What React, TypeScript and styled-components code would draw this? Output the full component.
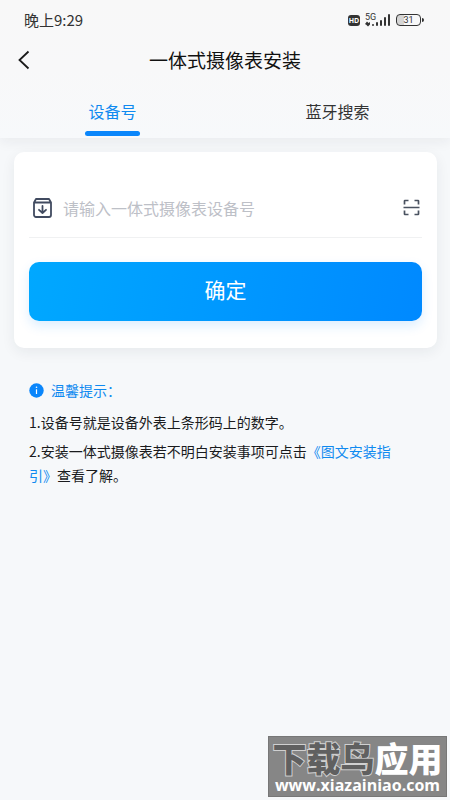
import React, { useState } from "react";
import styled, { createGlobalStyle } from "styled-components";

const GlobalStyle = createGlobalStyle`
  * { box-sizing: border-box; }
  html, body { margin: 0; background: #f6f8fa; }
  body, button, input { font-family: "Noto Sans CJK SC", sans-serif; }
`;

const Page = styled.div`
  min-height: 100vh;
  position: relative;
  color: #1a1b1d;
`;

const Top = styled.header`
  position: relative;
  background: linear-gradient(#f8f8f8, #f8f8f9 50%, #f7f9fb);
  box-shadow: 0 4px 12px rgba(30, 40, 50, 0.06);
`;

const StatusBar = styled.div`
  height: 40px;
  padding: 0 26px 0 24px;
  display: flex;
  align-items: center;
  justify-content: space-between;
  font-size: 15px;
  line-height: 20px;
  color: #333;
`;

const StatusIcons = styled.div`
  display: flex;
  align-items: center;
  gap: 5px;
`;

const HdBadge = styled.span`
  width: 12px;
  height: 11px;
  border-radius: 3px;
  background: #333;
  color: #fff;
  font: 700 7px/11px "Open Sans", sans-serif;
  text-align: center;
`;

const Network = styled.div`
  width: 26px;
  height: 14px;
  position: relative;
  svg { display: block; }
`;

const NetworkLabel = styled.span`
  position: absolute;
  left: 0;
  top: 0;
  font: 400 9px/8px Roboto, sans-serif;
`;

const Battery = styled.div`
  display: flex;
  align-items: center;
  gap: 1px;
  &::after {
    content: "";
    width: 2px;
    height: 4px;
    border-radius: 0 2px 2px 0;
    background: #333;
  }
`;

const BatteryLevel = styled.span`
  width: 25px;
  height: 12px;
  border: 1px solid #333;
  border-radius: 4px;
  background: linear-gradient(90deg, #d5d5d5 32%, transparent 32%);
  font: 400 9px/10px Roboto, sans-serif;
  text-align: center;
`;

const TitleBar = styled.div`
  height: 40px;
  display: grid;
  grid-template-columns: 48px 1fr 48px;
  align-items: center;
`;

const BackButton = styled.button`
  width: 48px;
  height: 40px;
  padding: 0 0 0 17px;
  border: 0;
  background: none;
  svg { display: block; }
`;

const Title = styled.h1`
  margin: 0;
  font-size: 19px;
  line-height: 28px;
  font-weight: 400;
  text-align: center;
  color: #111;
`;

const Tabs = styled.div`
  display: flex;
  height: 58px;
  padding-top: 19px;
`;

const Tab = styled.button<{ $active: boolean }>`
  flex: 1;
  display: flex;
  flex-direction: column;
  align-items: center;
  gap: 8px;
  padding: 0;
  border: 0;
  background: none;
  font-size: 16px;
  line-height: 24px;
  color: ${(p) => (p.$active ? "#0f8af0" : "#333")};
  &::after {
    content: "";
    width: 55px;
    height: 5px;
    border-radius: 3px;
    background: ${(p) => (p.$active ? "#0a86fb" : "transparent")};
  }
`;

const Card = styled.form`
  position: relative;
  margin: 14px 13px 0 14px;
  padding: 26px 15px 27px;
  border-radius: 10px;
  background: #fff;
  box-shadow: 0 4px 14px rgba(30, 40, 50, 0.07);
`;

const Field = styled.div`
  height: 60px;
  padding: 0 2px 0 4px;
  display: flex;
  align-items: center;
  border-bottom: 1px solid #f0f1f2;
  svg { display: block; flex: none; }
`;

const NumberInput = styled.input`
  flex: 1;
  min-width: 0;
  margin-left: 11px;
  padding: 0;
  border: 0;
  outline: 0;
  background: none;
  font-size: 16px;
  line-height: 24px;
  color: #333;
  &::placeholder { color: #bdc0c7; opacity: 1; }
`;

const ScanButton = styled.button`
  padding: 0;
  border: 0;
  background: none;
`;

const SubmitButton = styled.button`
  width: 100%;
  height: 59px;
  margin-top: 24px;
  padding: 0 0 6px;
  display: block;
  border: 0;
  border-radius: 10px;
  background: linear-gradient(100deg, #00a8ff, #0089ff);
  box-shadow: 0 5px 12px rgba(0, 137, 255, 0.14);
  font-size: 21px;
  line-height: 30px;
  color: #fff;
`;

const Hints = styled.section`
  padding: 30px 40px 0 29px;
  font-size: 14px;
  line-height: 24px;
`;

const HintTitle = styled.h2`
  margin: 0;
  display: flex;
  align-items: center;
  gap: 7px;
  font-size: 14px;
  line-height: 24px;
  font-weight: 400;
  color: #0f8af0;
`;

const HintLine = styled.p`
  margin: 0 0 5px;
  &:first-of-type { margin-top: 8px; }
`;

const GuideLink = styled.a`
  color: #0f8af0;
  text-decoration: none;
`;

const Watermark = styled.aside`
  position: absolute;
  right: 3px;
  bottom: 3px;
  width: 179px;
  height: 61px;
  padding-top: 4px;
  border: 1px solid #777;
  background: #868686;
  text-align: center;
  white-space: nowrap;
`;

const WatermarkName = styled.div`
  font-size: 34px;
  line-height: 34px;
  font-weight: 900;
  color: #fff;
`;

const Outlined = styled.span`
  color: #606060;
  -webkit-text-stroke: 2px #d0d0d0;
  paint-order: stroke fill;
`;

const WatermarkUrl = styled.div`
  font: 700 16px/20px "Open Sans", sans-serif;
  color: #fff;
`;

const SignalIcon = () => (
  <svg width="26" height="14" viewBox="0 0 26 14" fill="#333" aria-hidden="true">
    <path d="M0 11l2-2.5 1.5 1.5 1.5-1v2.5L3 13.5 1.5 12z" />
    <rect x="7" y="11" width="2" height="2" rx="1" />
    <rect x="11" y="9" width="2" height="4" rx="1" />
    <rect x="15" y="7" width="2" height="6" rx="1" />
    <rect x="19" y="4" width="2" height="9" rx="1" />
    <rect x="23" y="1" width="2" height="12" rx="1" />
  </svg>
);

const BackIcon = () => (
  <svg width="13" height="20" viewBox="0 0 13 20" fill="none" stroke="#1a1a1a" strokeWidth="1.8" aria-hidden="true">
    <path d="M11.5 1.5L2.5 10l9 8.5" />
  </svg>
);

const BoxIcon = () => (
  <svg width="19" height="20" viewBox="0 0 19 20" fill="none" stroke="#414b60" strokeWidth="1.8" strokeLinecap="round" strokeLinejoin="round" aria-hidden="true">
    <path d="M1 4.5L3 1h13l2 3.5V17a2 2 0 0 1-2 2H3a2 2 0 0 1-2-2zM1.5 4.5h16" />
    <path d="M9.5 8v7M6 11.8L9.5 15l3.5-3.2" />
  </svg>
);

const ScanIcon = () => (
  <svg width="17" height="17" viewBox="0 0 17 17" fill="none" stroke="#4a5260" strokeWidth="1.7" aria-hidden="true">
    <path d="M1.5 5.5V2q0-.5.5-.5h3.5M11.5 1.5H15q.5 0 .5.5v3.5M15.5 11.5V15q0 .5-.5.5h-3.5M5.5 15.5H2q-.5 0-.5-.5v-3.5M.5 8.5h16" />
  </svg>
);

const InfoIcon = () => (
  <svg width="15" height="15" viewBox="0 0 15 15" aria-hidden="true">
    <circle cx="7.5" cy="7.5" r="7.2" fill="#0a86fb" />
    <circle cx="7.5" cy="4.2" r=".8" fill="#fff" />
    <path d="M7.5 6.3V11" fill="none" stroke="#fff" strokeWidth="1.2" />
  </svg>
);

const TAB_NAMES = ["设备号", "蓝牙搜索"];

export default function App() {
  const [active, setActive] = useState(0);
  return (
    <Page>
      <GlobalStyle />
      <Top>
        <StatusBar>
          <span>晚上9:29</span>
          <StatusIcons>
            <HdBadge>HD</HdBadge>
            <Network>
              <NetworkLabel>5G</NetworkLabel>
              <SignalIcon />
            </Network>
            <Battery>
              <BatteryLevel>31</BatteryLevel>
            </Battery>
          </StatusIcons>
        </StatusBar>
        <TitleBar>
          <BackButton aria-label="返回"><BackIcon /></BackButton>
          <Title>一体式摄像表安装</Title>
        </TitleBar>
        <Tabs role="tablist">
          {TAB_NAMES.map((name, i) => (
            <Tab key={name} role="tab" aria-selected={i === active} $active={i === active} onClick={() => setActive(i)}>
              {name}
            </Tab>
          ))}
        </Tabs>
      </Top>
      <main>
        <Card onSubmit={(e) => e.preventDefault()}>
          <Field>
            <BoxIcon />
            <NumberInput aria-label="设备号" placeholder="请输入一体式摄像表设备号" />
            <ScanButton type="button" aria-label="扫码"><ScanIcon /></ScanButton>
          </Field>
          <SubmitButton type="submit">确定</SubmitButton>
        </Card>
        <Hints>
          <HintTitle><InfoIcon />温馨提示：</HintTitle>
          <HintLine>1.设备号就是设备外表上条形码上的数字。</HintLine>
          <HintLine>
            2.安装一体式摄像表若不明白安装事项可点击<GuideLink href="#guide">《图文安装指引》</GuideLink>查看了解。
          </HintLine>
        </Hints>
      </main>
      <Watermark>
        <WatermarkName><Outlined>下载鸟</Outlined>应用</WatermarkName>
        <WatermarkUrl>www.xiazainiao.com</WatermarkUrl>
      </Watermark>
    </Page>
  );
}
